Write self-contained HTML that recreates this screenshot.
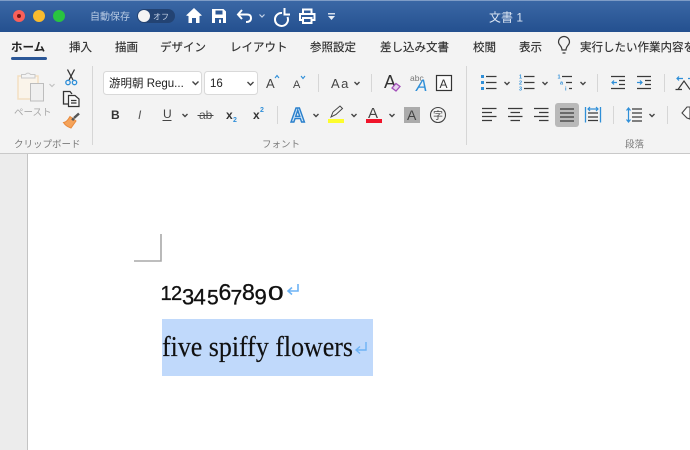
<!DOCTYPE html>
<html lang="ja"><head><meta charset="utf-8"><title>文書 1</title>
<style>
html,body{margin:0;padding:0;width:690px;height:450px;overflow:hidden;background:#fff}
svg{display:block;position:absolute;left:0;top:0}
text{font-family:"Liberation Sans","Noto Sans CJK JP",sans-serif}
.tab{font-size:11.5px;fill:#2f2f2f;stroke:#2f2f2f;stroke-width:.15}
.lbl{font-size:9.5px;fill:#7b7b7b}
.ic{fill:none;stroke:#3a3a3a;stroke-width:1.2}
.ch{fill:none;stroke:#444;stroke-width:1.4}
.w{fill:none;stroke:#fff;stroke-width:2}
.bl{fill:none;stroke:#2f8fd8;stroke-width:1.2}
</style></head><body>
<svg width="690" height="450" viewBox="0 0 690 450" xmlns="http://www.w3.org/2000/svg">
<defs><linearGradient id="tb" x1="0" y1="0" x2="0" y2="1"><stop offset="0" stop-color="#3b68a6"/><stop offset="1" stop-color="#24508f"/></linearGradient></defs>
<!-- backgrounds -->
<rect width="690" height="450" fill="#fff"/>
<rect x="0" y="153" width="28" height="297" fill="#ececec"/>
<rect x="27" y="153" width="1" height="297" fill="#c4c4c4"/>
<rect y="32" width="690" height="121" fill="#f3f3f3"/>
<rect y="153" width="690" height="1" fill="#c9c9c9"/>
<rect width="690" height="32" fill="url(#tb)"/>
<rect width="690" height="1" fill="#7e9cc6"/>
<!-- traffic lights -->
<circle cx="19" cy="16" r="6" fill="#f9605a"/><circle cx="19" cy="16" r="2" fill="#7a1512"/>
<circle cx="39" cy="16" r="6" fill="#f9bb2e"/>
<circle cx="59" cy="16" r="6" fill="#29c440"/>
<!-- autosave -->
<text x="90" y="20" font-size="10" fill="#b9cbe4">自動保存</text>
<rect x="137" y="9" width="38" height="14" rx="7" fill="#234373"/>
<circle cx="144" cy="16" r="6" fill="#f4f4f4"/>
<text x="153" y="19.500" font-size="8" fill="#c4d2e6">オフ</text>
<!-- QAT -->
<path d="M194 8 L186 15.500 L188.500 16 L188.500 23 L192 23 L192 18 L196 18 L196 23 L199.500 23 L199.500 16 L202 15.500 Z" fill="#fff"/>
<path d="M212 9 H223.500 L226 11.500 V23 H212 Z" fill="#fff"/>
<rect x="215.500" y="10.500" width="7" height="4" fill="#2c5896"/>
<rect x="215" y="18" width="8" height="5" fill="#2c5896"/><rect x="219" y="19.500" width="2" height="3.500" fill="#fff"/>
<path class="w" d="M242 10 L238 14.500 L242 19 M238 14.500 H247 Q251 14.500 251 18 Q251 22 246 22" />
<path d="M259.500 14.500 L262 17 L264.500 14.500" fill="none" stroke="#c6d4e8" stroke-width="1.200"/>
<path class="w" d="M282 13 A6.500 6.500 0 1 0 287.500 17 M284.500 8 V14.500 H290"/>
<path class="w" d="M303 14 V9.500 H311.500 V14 M303 20 H300 V14 H314.500 V20 H311.500 M303 18 H311.500 V23 H303 Z" stroke-width="1.800"/>
<rect x="328" y="13" width="7" height="1.500" fill="#d5deec"/>
<path d="M328 16 H335 L331.500 20 Z" fill="#e8eef6"/>
<text x="489" y="21.500" font-size="12" fill="#dbe5f3">文書 1</text>
<!-- tabs -->
<text x="11" y="51" font-size="11.500" font-weight="700" fill="#222">ホーム</text>
<rect x="11" y="57" width="36" height="3" rx="1.500" fill="#2b5797"/>
<text class="tab" x="69" y="51">挿入</text>
<text class="tab" x="115" y="51">描画</text>
<text class="tab" x="160" y="51">デザイン</text>
<text class="tab" x="230" y="51">レイアウト</text>
<text class="tab" x="310" y="51">参照設定</text>
<text class="tab" x="380" y="51">差し込み文書</text>
<text class="tab" x="473" y="51">校閲</text>
<text class="tab" x="519" y="51">表示</text>
<path class="ic" d="M562 50 C562 46 558.500 45 558.500 42 A5.500 5.500 0 0 1 569.500 42 C569.500 45 566 46 566 50 Z M562.500 53 H565.500"/>
<text class="tab" x="580" y="51">実行したい作業内容を</text>
<!-- separators -->
<rect x="92" y="66" width="1" height="79" fill="#d6d6d6"/>
<rect x="466" y="66" width="1" height="79" fill="#d6d6d6"/>
<rect x="318" y="74" width="1" height="18" fill="#d6d6d6"/>
<rect x="371" y="74" width="1" height="18" fill="#d6d6d6"/>
<rect x="277" y="106" width="1" height="18" fill="#d6d6d6"/>
<rect x="597" y="74" width="1" height="18" fill="#d6d6d6"/>
<rect x="664" y="74" width="1" height="18" fill="#d6d6d6"/>
<rect x="613" y="106" width="1" height="18" fill="#d6d6d6"/>
<rect x="667" y="106" width="1" height="18" fill="#d6d6d6"/>
<!-- clipboard group -->
<rect x="18" y="76" width="20" height="23" fill="#faf4ea" stroke="#f3dfc2" stroke-width="1.500"/>
<path d="M21.500 78 V74.500 H25.500 A3 3 0 0 1 30.500 74.500 H35 V78 Z" fill="#f4f4f4" stroke="#c9c9c9"/>
<rect x="30.500" y="83.500" width="13" height="17.500" fill="#efefef" stroke="#bdbdbd"/>
<path d="M49.500 84 L52 86.500 L54.500 84" fill="none" stroke="#c2c2c2" stroke-width="1.200"/>
<text x="14" y="115.500" font-size="9.500" fill="#a8a8a8">ペースト</text>
<path d="M67.500 69.500 L73 80 M74.500 69.500 L69 80" fill="none" stroke="#333" stroke-width="1.300"/>
<circle cx="68" cy="82.500" r="2.200" fill="none" stroke="#2f8fd8" stroke-width="1.300"/>
<circle cx="74.500" cy="82.500" r="2.200" fill="none" stroke="#2f8fd8" stroke-width="1.300"/>
<path d="M68 104 H63.500 V91.500 H70 L72 94" fill="none" stroke="#333" stroke-width="1.300"/>
<path d="M68.500 95.500 H75 L79 99 V106.500 H68.500 Z M71 100.500 H76.500 M71 103 H76.500" fill="#f8f8f8" stroke="#333" stroke-width="1.200"/>
<path d="M70 116.500 L76 121 L71 128 C68 127 65 125 63.500 122.500 C66 122.500 68 120 70 116.500 Z" fill="#f5a35a" stroke="#e98a3c"/>
<path d="M72 118.500 L74 120 M74 118 L79 113.500" stroke="#555" stroke-width="2.500" fill="none"/>
<text class="lbl" x="14" y="147.500">クリップボード</text>
<!-- font group -->
<rect x="103.500" y="71.500" width="98" height="23" rx="3" fill="#fff" stroke="#d9d9d9"/>
<text x="109" y="87" font-size="11.500" fill="#222">游明朝 Regu...</text>
<path class="ch" d="M192.500 81.500 L195.500 84.500 L198.500 81.500" stroke-width="1.200"/>
<rect x="204.500" y="71.500" width="53" height="23" rx="3" fill="#fff" stroke="#d9d9d9"/>
<text x="210" y="87" font-size="11.500" fill="#222">16</text>
<path class="ch" d="M247.500 82 L250.500 85 L253.500 82" stroke-width="1.200"/>
<text x="266" y="88" font-size="13" fill="#444">A</text>
<path d="M275 78 L277 75.500 L279 78" fill="none" stroke="#2f8fd8" stroke-width="1.100"/>
<text x="293" y="88" font-size="11" fill="#444">A</text>
<path d="M301 76 L303 78.500 L305 76" fill="none" stroke="#2f8fd8" stroke-width="1.100"/>
<text x="331" y="88" font-size="13" letter-spacing="1.500" fill="#444">Aa</text>
<path class="ch" d="M354.500 82 L357 84.500 L359.500 82" stroke-width="1.300"/>
<text x="384" y="88" font-size="18" fill="#333">A</text>
<path d="M392 88 L396 83.500 L400 86.500 L396 91 Z" fill="#e6d3ee" stroke="#a24fb8" stroke-width="1.300"/>
<text x="410" y="81" font-size="8.500" fill="#777">abc</text>
<text x="416" y="91" font-size="17" font-style="italic" fill="#2f8fd8">A</text>
<rect x="436.500" y="75.500" width="15" height="15" fill="#fbfbfb" stroke="#333" stroke-width="1.200"/>
<text x="439.500" y="88" font-size="12" fill="#333">A</text>
<text x="111" y="119" font-size="12" font-weight="700" fill="#333">B</text>
<text x="138" y="119" font-size="12" font-style="italic" fill="#555">I</text>
<text x="163" y="118" font-size="12" fill="#444">U</text>
<rect x="162.500" y="120" width="9" height="1" fill="#444"/>
<path class="ch" d="M182.500 114 L185 116.500 L187.500 114" stroke-width="1.300"/>
<text x="199" y="119" font-size="12" fill="#555">ab</text>
<rect x="197.500" y="115" width="16" height="1" fill="#444"/>
<text x="226" y="119" font-size="12" font-weight="700" fill="#333">x</text>
<text x="233" y="122" font-size="7" font-weight="700" fill="#2f8fd8">2</text>
<text x="253" y="119" font-size="12" font-weight="700" fill="#333">x</text>
<text x="260" y="112" font-size="7" font-weight="700" fill="#2f8fd8">2</text>
<text x="290.500" y="122" font-size="20" font-weight="700" fill="#cfe3f6" stroke="#2a80cc" stroke-width="1.400">A</text>
<path class="ch" d="M313.500 114 L316 116.500 L318.500 114" stroke-width="1.300"/>
<path d="M331 117 L333 112 L340 106 L342.500 108.500 L336 114.500 Z" fill="#f3f3f3" stroke="#444" stroke-width="1"/>
<rect x="328" y="119" width="16" height="4" fill="#fdfd2d"/>
<path class="ch" d="M351.500 114 L354 116.500 L356.500 114" stroke-width="1.300"/>
<text x="368" y="118" font-size="15" fill="#444">A</text>
<rect x="366" y="119" width="16" height="4" fill="#f0142a"/>
<path class="ch" d="M389.500 114 L392 116.500 L394.500 114" stroke-width="1.300"/>
<rect x="404" y="107" width="16" height="16" fill="#ababab"/>
<text x="407" y="120" font-size="14" fill="#444">A</text>
<circle cx="438" cy="115" r="7.500" fill="none" stroke="#444" stroke-width="1.100"/>
<text x="433" y="119" font-size="10" fill="#444">字</text>
<text class="lbl" x="262" y="147.500">フォント</text>
<!-- paragraph group row 1 -->
<g fill="#2f8fd8"><rect x="481" y="75" width="3" height="3"/><rect x="481" y="81" width="3" height="3"/><rect x="481" y="87" width="3" height="3"/></g>
<path class="ic" d="M486 76.500 H496.500 M486 82.500 H496.500 M486 88.500 H496.500"/>
<path class="ch" d="M504.500 82 L507 84.500 L509.500 82" stroke-width="1.300"/>
<g font-size="5.500" font-weight="700" fill="#2f8fd8"><text x="519" y="78.500">1</text><text x="519" y="84.500">2</text><text x="519" y="90.500">3</text></g>
<path class="ic" d="M524 76.500 H534.500 M524 82.500 H534.500 M524 88.500 H534.500"/>
<path class="ch" d="M542.500 82 L545 84.500 L547.500 82" stroke-width="1.300"/>
<g font-size="5.500" font-weight="700" fill="#2f8fd8"><text x="557.500" y="78.500">1</text><text x="560" y="84.500">a</text><text x="565" y="90.500">i</text></g>
<path class="ic" d="M562 76.500 H572 M566 82.500 H572 M569 88.500 H572"/>
<path class="ch" d="M580.500 82 L583 84.500 L585.500 82" stroke-width="1.300"/>
<path class="ic" d="M611 76.500 H625 M619 80.500 H625 M619 84.500 H625 M611 88.500 H625"/>
<path class="bl" d="M617 82.500 H612 M614 80.500 L612 82.500 L614 84.500"/>
<path class="ic" d="M637 76.500 H651 M645 80.500 H651 M645 84.500 H651 M637 88.500 H651"/>
<path class="bl" d="M637 82.500 H642 M640 80.500 L642 82.500 L640 84.500"/>
<path class="bl" d="M677 78.500 H683 M679 76.500 L677 78.500 L679 80.500 M688 78.500 H690"/>
<path class="ic" d="M678 89.500 L684 81 L690 89.500 M675.500 89.500 H682"/>
<!-- paragraph group row 2 -->
<path class="ic" d="M482 108.500 H496.500 M482 112.500 H492 M482 116.500 H496.500 M482 120.500 H492"/>
<path class="ic" d="M508 108.500 H522.500 M510.500 112.500 H520 M508 116.500 H522.500 M510.500 120.500 H520"/>
<path class="ic" d="M534 108.500 H548.500 M539 112.500 H548.500 M534 116.500 H548.500 M539 120.500 H548.500"/>
<rect x="555" y="103" width="24" height="24" rx="3" fill="#b9b9b9"/>
<path class="ic" d="M560 109 H574 M560 113 H574 M560 117 H574 M560 121 H574"/>
<path d="M585.500 107 V122.500 M600.500 107 V122.500" fill="none" stroke="#2f8fd8" stroke-width="1.300"/>
<path class="ic" d="M588 113 H598 M588 117 H598 M588 120.500 H598"/>
<path class="bl" d="M588 109 H598 M590 107 L588 109 L590 111 M596 107 L598 109 L596 111"/>
<path class="bl" d="M628.500 109 V121 M626.500 110.500 L628.500 108 L630.500 110.500 M626.500 119.500 L628.500 122 L630.500 119.500" stroke-width="1.300"/>
<path class="ic" d="M632 109 H642 M632 113 H642 M632 117 H642 M632 121 H642"/>
<path class="ch" d="M649.500 114 L652 116.500 L654.500 114" stroke-width="1.300"/>
<path d="M682 113 L687 107 H690 V119 L687 118 Z" fill="#fbfbfb" stroke="#444" stroke-width="1.100"/>
<text class="lbl" x="625" y="147.500">段落</text>
<!-- document -->
<path d="M161 234 V261 H134" fill="none" stroke="#a8a8a8" stroke-width="1.600"/>
<g fill="#111" stroke="#111" stroke-width=".35">
<text x="160.500" y="300" font-size="20">1</text>
<text x="171" y="300" font-size="20">2</text>
<text x="182" y="304.500" font-size="22">3</text>
<text x="193.500" y="304.500" font-size="22">4</text>
<text x="207" y="304.500" font-size="21">5</text>
<text x="218.500" y="300" font-size="23">6</text>
<text x="230.500" y="304.500" font-size="21">7</text>
<text x="242" y="300" font-size="23">8</text>
<text x="254.500" y="304.500" font-size="22">9</text>
<text transform="translate(268 300) scale(1.400 1)" font-size="20">0</text>
</g>
<path d="M298 284 V291 H288.500 M292 287.500 L288 291 L292 294.500" fill="none" stroke="#6db3f5" stroke-width="1.600"/>
<rect x="162" y="319" width="211" height="57" fill="#c0d9fb"/>
<text x="162" y="356" textLength="191" lengthAdjust="spacingAndGlyphs" stroke="#111" stroke-width=".15" style="font-family:'Liberation Serif',serif;font-size:29px;fill:#111">five spiffy flowers</text>
<path d="M366 342 V350 H356.500 M360 346.500 L356 350 L360 353.500" fill="none" stroke="#6db3f5" stroke-width="1.400"/>
</svg>
</body></html>
